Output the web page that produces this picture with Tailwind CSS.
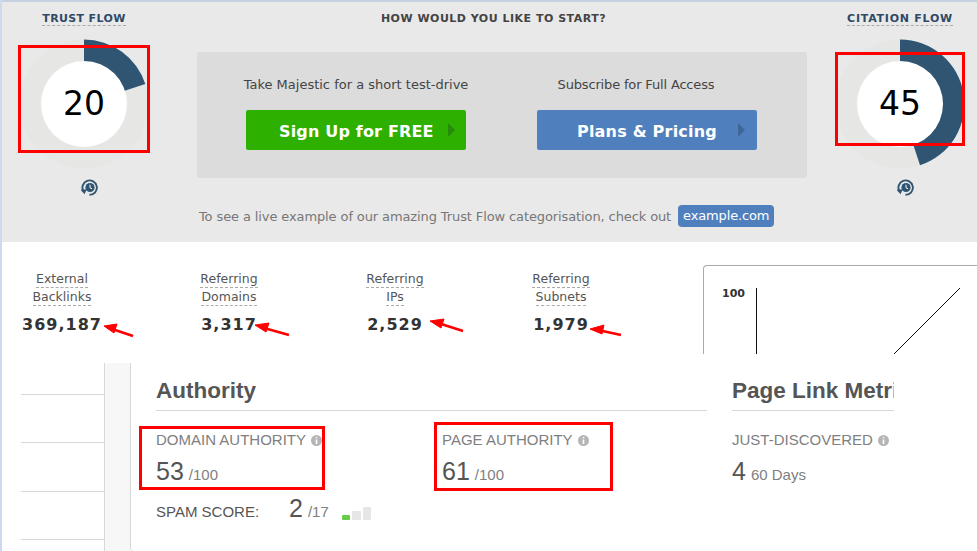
<!DOCTYPE html>
<html lang="en">
<head>
  <meta charset="UTF-8" />
  <title>Majestic and Authority metrics</title>
  <script src="https://cdn.jsdelivr.net/npm/@tailwindcss/browser@4"></script>
</head>
<body class="bg-white font-['DejaVu_Sans',sans-serif]">
  <div class="relative w-[977px] h-[551px] overflow-hidden bg-white border-l-2 border-[#cdd9ec] box-border">

    <!-- top band -->
    <div class="flex h-[242px] bg-[#e9e9e9] border-t-2 border-[#c5d0e3] box-border">
      <div class="w-[164px] flex flex-col items-center shrink-0">
        <span class="mt-[10px] text-[11px] leading-[13px] font-bold tracking-[0.35px] text-[#2f4a66] border-b border-dashed border-[#aaa]">TRUST FLOW</span>
        <div class="relative mt-[13px] w-[130px] h-[130px]">
          <svg width="130" height="130" viewBox="0 0 130 130">
            <circle cx="65" cy="65" r="64.5" fill="#e6e6e4" />
            <path d="M65 0.5 A64.5 64.5 0 0 1 126.3 45.1 L65 65 Z" fill="#2f5573" />
          </svg>
          <div class="absolute left-[22px] top-[22px] w-[86px] h-[86px] rounded-full bg-white flex items-center justify-center text-[33px] text-black">20</div>
        </div>
        <svg class="mt-[10px] ml-[9px]" width="18" height="18" viewBox="0 0 18 18">
          <circle cx="10" cy="8.5" r="4.6" fill="#2f5573" />
          <path d="M10 5.8V8.7L12 9.8" fill="none" stroke="#fff" stroke-width="1" />
          <path d="M3.6 12.5A7.2 7.2 0 1 1 9.5 15.8" fill="none" stroke="#2f5573" stroke-width="1.9" />
          <path d="M0.6 10.8L6.8 10.2L4.5 15.2Z" fill="#2f5573" />
        </svg>
      </div>

      <div class="w-[610px] ml-[31px] shrink-0 flex flex-col items-center">
        <h2 class="mt-[10px] mr-[17px] text-[11px] leading-[13px] font-bold tracking-[0.5px] text-[#444]">HOW WOULD YOU LIKE TO START?</h2>
        <div class="mt-[27px] w-full h-[126px] rounded-[3px] bg-[#dcdcdc] flex pl-[49px] gap-[71px]">
          <div class="w-[220px] flex flex-col items-center">
            <p class="mt-[24px] text-[13px] leading-[17px] whitespace-nowrap text-[#444]">Take Majestic for a short test-drive</p>
            <a class="mt-[17px] w-full h-[40px] rounded-[2px] bg-[#2db000] flex items-center text-white font-bold text-[16px] tracking-[0.17px] pl-[33px]"><span class="mt-[4px]">Sign Up for FREE</span><span class="ml-[14px] w-0 h-0 border-y-[7px] border-y-transparent border-l-[7px] border-l-[#268a0c]"></span></a>
          </div>
          <div class="w-[220px] flex flex-col items-center">
            <p class="mt-[24px] mr-[22px] text-[13px] leading-[17px] tracking-[-0.16px] whitespace-nowrap text-[#444]">Subscribe for Full Access</p>
            <a class="mt-[17px] w-full h-[40px] rounded-[2px] bg-[#4f80bd] flex items-center text-white font-bold text-[16px] tracking-[0.2px] pl-[40px]"><span class="mt-[4px]">Plans &amp; Pricing</span><span class="ml-[21px] w-0 h-0 border-y-[7px] border-y-transparent border-l-[7px] border-l-[#3f6699]"></span></a>
          </div>
        </div>
        <div class="mt-[27px] w-full flex items-center pl-[2px]">
          <span class="mt-[2px] text-[13px] tracking-[-0.11px] text-[#777] whitespace-nowrap">To see a live example of our amazing Trust Flow categorisation, check out</span>
          <span class="ml-[7px] h-[22px] px-[5px] rounded-[4px] bg-[#4f80bd] text-white text-[13px] tracking-[-0.15px] leading-[22px]">example.com</span>
        </div>
      </div>

      <div class="w-[154px] ml-[16px] shrink-0 flex flex-col items-center">
        <span class="mt-[10px] text-[11px] leading-[13px] font-bold tracking-[0.75px] text-[#2f4a66] border-b border-dashed border-[#aaa] whitespace-nowrap">CITATION FLOW</span>
        <div class="relative mt-[13px] w-[130px] h-[130px]">
          <svg width="130" height="130" viewBox="0 0 130 130">
            <circle cx="65" cy="65" r="64.5" fill="#e6e6e4" />
            <path d="M65 0.5 A64.5 64.5 0 0 1 85 126.3 L65 65 Z" fill="#2f5573" />
          </svg>
          <div class="absolute left-[22px] top-[22px] w-[86px] h-[86px] rounded-full bg-white flex items-center justify-center text-[33px] text-black">45</div>
        </div>
        <svg class="mt-[10px] ml-[9px]" width="18" height="18" viewBox="0 0 18 18">
          <circle cx="10" cy="8.5" r="4.6" fill="#2f5573" />
          <path d="M10 5.8V8.7L12 9.8" fill="none" stroke="#fff" stroke-width="1" />
          <path d="M3.6 12.5A7.2 7.2 0 1 1 9.5 15.8" fill="none" stroke="#2f5573" stroke-width="1.9" />
          <path d="M0.6 10.8L6.8 10.2L4.5 15.2Z" fill="#2f5573" />
        </svg>
      </div>
    </div>

    <!-- stats row, clipped at the screenshot seam -->
    <div class="relative flex h-[112px] overflow-hidden">
      <div class="w-[120px] mt-[29px] flex flex-col items-center text-[12.5px] leading-[18px] text-[#555] shrink-0">
        <span class="border-b border-dashed border-[#aaa] leading-[16px] mb-[1px]">External</span>
        <span class="border-b border-dashed border-[#aaa] leading-[16px]">Backlinks</span>
        <strong class="mt-[10px] text-[16px] tracking-[1px] text-[#333]">369,187</strong>
      </div>
      <div class="w-[120px] ml-[47px] mt-[29px] flex flex-col items-center text-[12.5px] leading-[18px] text-[#555] shrink-0">
        <span class="border-b border-dashed border-[#aaa] leading-[16px] mb-[1px]">Referring</span>
        <span class="border-b border-dashed border-[#aaa] leading-[16px]">Domains</span>
        <strong class="mt-[10px] text-[16px] tracking-[1px] text-[#333]">3,317</strong>
      </div>
      <div class="w-[120px] ml-[46px] mt-[29px] flex flex-col items-center text-[12.5px] leading-[18px] text-[#555] shrink-0">
        <span class="border-b border-dashed border-[#aaa] leading-[16px] mb-[1px]">Referring</span>
        <span class="border-b border-dashed border-[#aaa] leading-[16px]">IPs</span>
        <strong class="mt-[10px] text-[16px] tracking-[1px] text-[#333]">2,529</strong>
      </div>
      <div class="w-[120px] ml-[46px] mt-[29px] flex flex-col items-center text-[12.5px] leading-[18px] text-[#555] shrink-0">
        <span class="border-b border-dashed border-[#aaa] leading-[16px] mb-[1px]">Referring</span>
        <span class="border-b border-dashed border-[#aaa] leading-[16px]">Subnets</span>
        <strong class="mt-[10px] text-[16px] tracking-[1px] text-[#333]">1,979</strong>
      </div>
      <div class="ml-[82px] mt-[23px] w-[280px] h-[120px] shrink-0 flex border border-r-0 border-[#aaa] rounded-tl-[4px] pl-[18px] pt-[21px]">
        <span class="text-[11px] leading-[13px] font-bold text-[#333]">100</span>
        <svg class="ml-[11px] mt-[1px]" width="210" height="70" viewBox="0 0 210 70">
          <path d="M0.5 0V70M204 0L138 66" fill="none" stroke="#111" stroke-width="1" />
        </svg>
      </div>
    </div>

    <!-- authority panel -->
    <div class="flex mt-[9px] h-[188px] font-['Liberation_Sans',sans-serif]">
      <div class="w-[84px] ml-[19px] shrink-0 border-r border-[#d8d8d8] pt-[31px]">
        <div class="h-[48px] border-t border-[#d8d8d8]"></div>
        <div class="h-[49px] border-t border-[#d8d8d8]"></div>
        <div class="h-[48px] border-t border-[#d8d8d8]"></div>
        <div class="border-t border-[#d8d8d8]"></div>
      </div>
      <div class="w-[30px] shrink-0 bg-[#f7f7f7]"></div>
      <div class="relative ml-[-5px] flex-1 flex pl-[25px] bg-white border-l border-[#d8d8d8] rounded-bl-[4px]">
        <div class="w-[551px] shrink-0">
          <h3 class="h-[48px] pt-[14px] text-[22.5px] leading-[28px] font-bold text-[#555] border-b border-[#d8d8d8] box-border">Authority</h3>
          <div class="flex">
            <div class="w-[286px]">
              <div class="mt-[20px] h-[18px] flex items-center text-[15px] text-[#808080]">DOMAIN AUTHORITY
                <svg class="ml-[5px]" width="11" height="11" viewBox="0 0 11 11"><circle cx="5.5" cy="5.5" r="5.5" fill="#b5b5b5" /><path d="M5.5 2V3.2M5.5 4.4V9" stroke="#fff" stroke-width="1.6" /></svg>
              </div>
              <div class="mt-[10px] h-[32px] flex items-baseline text-[#555]"><span class="text-[25px] leading-none">53</span><span class="ml-[5px] text-[15px] text-[#808080]">/100</span></div>
              <div class="mt-[5px] h-[32px] flex items-baseline text-[#555]">
                <span class="w-[133px] text-[15px]">SPAM SCORE:</span><span class="text-[25px] leading-none">2</span><span class="ml-[5px] text-[15px] text-[#808080]">/17</span>
                <span class="ml-[13px] flex items-end gap-[2px] h-[13px] self-start mt-[11px]">
                  <i class="block w-[8px] h-[5px] bg-[#68cc4a] rounded-[1px]"></i>
                  <i class="block w-[9px] h-[9px] bg-[#e6e6e6] rounded-[1px]"></i>
                  <i class="block w-[8px] h-[13px] bg-[#e6e6e6] rounded-[1px]"></i>
                </span>
              </div>
            </div>
            <div>
              <div class="mt-[20px] h-[18px] flex items-center text-[15px] text-[#808080]">PAGE AUTHORITY
                <svg class="ml-[5px]" width="11" height="11" viewBox="0 0 11 11"><circle cx="5.5" cy="5.5" r="5.5" fill="#b5b5b5" /><path d="M5.5 2V3.2M5.5 4.4V9" stroke="#fff" stroke-width="1.6" /></svg>
              </div>
              <div class="mt-[10px] h-[32px] flex items-baseline text-[#555]"><span class="text-[25px] leading-none">61</span><span class="ml-[5px] text-[15px] text-[#808080]">/100</span></div>
            </div>
          </div>
        </div>
        <div class="w-[162px] ml-[25px] shrink-0 overflow-hidden">
          <h3 class="h-[48px] pt-[14px] text-[22.5px] leading-[28px] font-bold text-[#555] border-b border-[#d8d8d8] box-border whitespace-nowrap">Page Link Metrics</h3>
          <div class="mt-[20px] h-[18px] flex items-center text-[15px] text-[#808080]">JUST-DISCOVERED
            <svg class="ml-[5px]" width="11" height="11" viewBox="0 0 11 11"><circle cx="5.5" cy="5.5" r="5.5" fill="#b5b5b5" /><path d="M5.5 2V3.2M5.5 4.4V9" stroke="#fff" stroke-width="1.6" /></svg>
          </div>
          <div class="mt-[10px] h-[32px] flex items-baseline text-[#555]"><span class="text-[25px] leading-none">4</span><span class="ml-[5px] text-[15px] text-[#808080]">60 Days</span></div>
        </div>
      </div>
    </div>

    <!-- red annotations drawn over the screenshot -->
    <div class="absolute left-[16px] top-[45px] w-[132px] h-[108px] border-[3px] border-[#f00]"></div>
    <div class="absolute left-[833px] top-[52px] w-[130px] h-[94px] border-[3px] border-[#f00]"></div>
    <div class="absolute left-[137px] top-[426px] w-[186px] h-[64px] border-[3px] border-[#f00]"></div>
    <div class="absolute left-[432px] top-[422px] w-[179px] h-[69px] border-[3px] border-[#f00]"></div>
    <svg class="absolute left-[-2px] top-0" width="977" height="551" viewBox="0 0 977 551">
      <g fill="#f00" stroke="#f00" stroke-width="2.6">
        <path d="M133 336L112 329" /><path d="M104 326L117 324L114 333Z" stroke-width="1" />
        <path d="M289 335L264 328" /><path d="M255 325L269 323L266 332Z" stroke-width="1" />
        <path d="M463 331L438 323" /><path d="M430 321L444 319L441 328Z" stroke-width="1" />
        <path d="M621 335L598 330" /><path d="M590 329L604 325L602 334Z" stroke-width="1" />
      </g>
    </svg>
  </div>
</body>
</html>
